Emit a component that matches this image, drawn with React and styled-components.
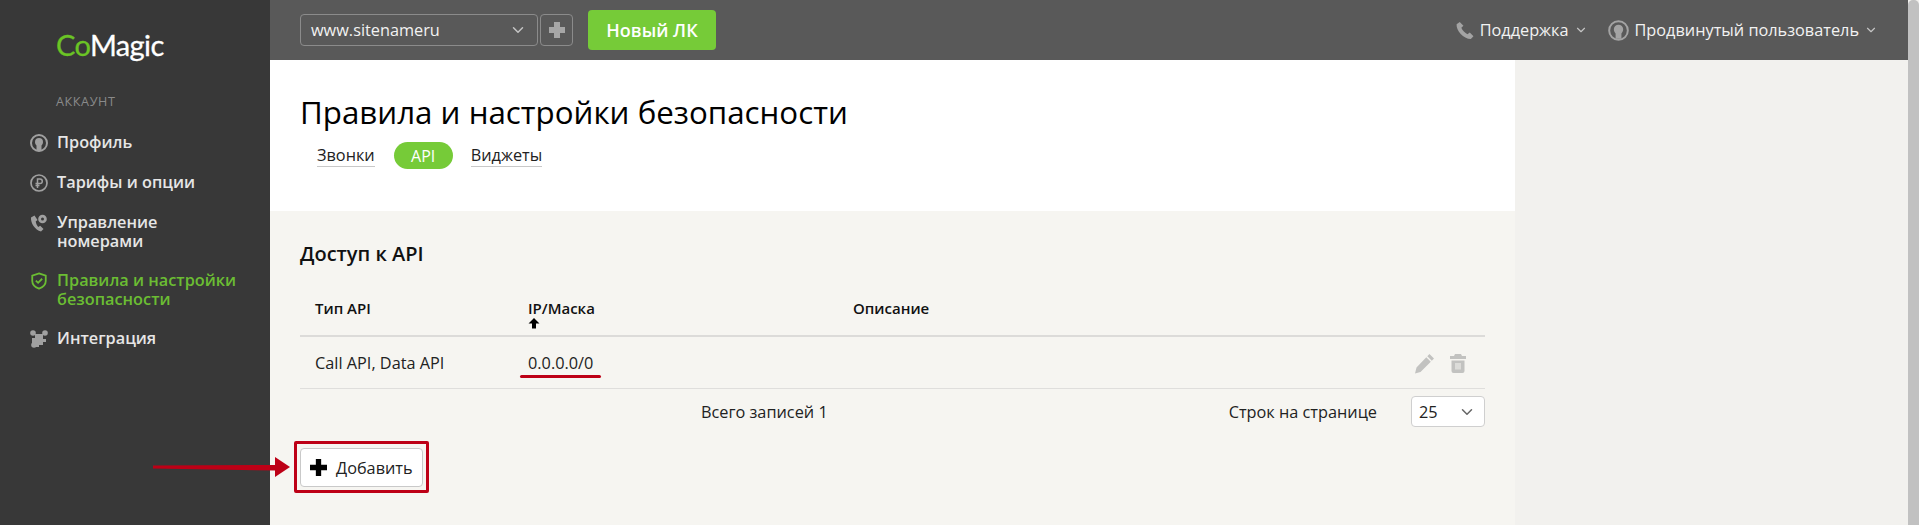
import styled, { createGlobalStyle } from "styled-components";
import { ChevronDown } from "lucide-react";

const Global = createGlobalStyle`
  html, body {
    margin: 0;
    padding: 0;
    height: 525px;
    overflow: hidden;
    font-family: "Open Sans", sans-serif;
  }
`;

const Page = styled.div`
  position: relative;
  display: flex;
  width: 1919px;
  height: 525px;
  overflow: hidden;
  background: #f2f1ee;
`;

const Sidebar = styled.aside`
  width: 270px;
  flex-shrink: 0;
  background: #383838;
  display: flex;
  flex-direction: column;
`;

const LogoBox = styled.div`
  height: 33px;
  margin: 28px 0 0 56px;
  font-family: "Lato", sans-serif;
  font-size: 29px;
  line-height: 33px;
  letter-spacing: -0.6px;
  -webkit-text-stroke: 0.3px currentColor;
  color: #fff;
  span {
    color: #6bc425;
  }
`;

const SectionLabel = styled.div`
  margin: 33px 0 0 56px;
  font-size: 12.6px;
  line-height: 16px;
  letter-spacing: 0.6px;
  color: #8a8a8a;
`;

const Menu = styled.nav`
  display: flex;
  flex-direction: column;
  margin-top: 23px;
  padding-left: 30px;
`;

const MenuItem = styled.a`
  display: flex;
  gap: 9px;
  margin-bottom: ${(p) => p.$gap}px;
  font-size: 16.3px;
  font-weight: 600;
  line-height: 19px;
  color: ${(p) => (p.$active ? "#6bbd33" : "#e6e6e6")};
  svg {
    flex-shrink: 0;
    width: 18px;
    height: 18px;
    margin-top: 1px;
  }
`;

const Main = styled.div`
  flex: 1;
  display: flex;
  flex-direction: column;
  min-width: 0;
`;

const TopBar = styled.header`
  height: 60px;
  flex-shrink: 0;
  background: #595959;
  display: flex;
  align-items: center;
  padding: 0 30px;
`;

const SiteSelect = styled.div`
  width: 238px;
  height: 32px;
  box-sizing: border-box;
  border: 1px solid #8b8b8b;
  border-radius: 4px;
  display: flex;
  align-items: center;
  justify-content: space-between;
  padding: 0 10px;
  font-size: 16.3px;
  color: #f2f2f2;
  svg {
    color: #c4c4c4;
  }
`;

const AddSite = styled.div`
  width: 33px;
  height: 32px;
  box-sizing: border-box;
  margin-left: 2px;
  border: 1px solid #8b8b8b;
  border-radius: 4px;
  display: flex;
  align-items: center;
  justify-content: center;
`;

const NewButton = styled.div`
  width: 128px;
  height: 40px;
  margin-left: 15px;
  background: #76cb38;
  border-radius: 4px;
  display: flex;
  align-items: center;
  justify-content: center;
  font-size: 18px;
  font-weight: 600;
  color: #fff;
`;

const TopRight = styled.div`
  margin-left: auto;
  display: flex;
  align-items: center;
  font-size: 16.3px;
  color: #f2f2f2;
`;

const TopLink = styled.div`
  display: flex;
  align-items: center;
  gap: 6px;
  margin-left: ${(p) => p.$left || 0}px;
  svg.chevron {
    color: #c4c4c4;
    margin-left: -1px;
  }
`;

const Columns = styled.div`
  flex: 1;
  display: flex;
  min-height: 0;
`;

const Content = styled.main`
  width: 1245px;
  flex-shrink: 0;
  background: #f6f5f1;
`;

const Head = styled.div`
  height: 151px;
  box-sizing: border-box;
  background: #fff;
  padding: 33px 30px 0;
`;

const Title = styled.h1`
  margin: 0;
  font-size: 31.3px;
  font-weight: 400;
  line-height: 38px;
  color: #000;
`;

const Tabs = styled.div`
  display: flex;
  align-items: center;
  margin: 11px 0 0 17px;
`;

const Tab = styled.div`
  font-size: 16.3px;
  line-height: 21px;
  color: #222;
  border-bottom: 1px solid #c8c8c8;
  margin-right: ${(p) => p.$gap}px;
`;

const ActiveTab = styled.div`
  width: 59px;
  height: 27px;
  margin-right: 18px;
  background: #76cb38;
  border-radius: 14px;
  display: flex;
  align-items: center;
  justify-content: center;
  font-size: 16px;
  color: #fff;
`;

const Section = styled.section`
  padding: 31px 30px 0;
`;

const SectionTitle = styled.h2`
  margin: 0;
  font-size: 20px;
  font-weight: 600;
  line-height: 24px;
  color: #111;
`;

const Grid = `
  display: grid;
  grid-template-columns: 213px 325px 1fr;
  padding-left: 15px;
  width: 1185px;
  box-sizing: border-box;
`;

const HeadRow = styled.div`
  ${Grid}
  height: 54px;
  margin-top: 17px;
  padding-top: 15px;
  border-bottom: 2px solid #dcdbd9;
  font-size: 15px;
  font-weight: 600;
  line-height: 20px;
  color: #111;
`;

const ArrowUp = styled.div`
  height: 12px;
  margin-top: -1px;
  line-height: 0;
`;

const BodyRow = styled.div`
  ${Grid}
  position: relative;
  height: 52px;
  align-items: center;
  border-bottom: 1px solid #dfdedc;
  font-size: 16.3px;
  color: #222;
`;

const RowActions = styled.div`
  position: absolute;
  right: 18px;
  top: 16px;
  display: flex;
  gap: 14px;
`;

const Footer = styled.div`
  display: flex;
  align-items: center;
  width: 1185px;
  height: 45px;
  font-size: 16.3px;
  color: #222;
`;

const Total = styled.div`
  margin-left: 401px;
`;

const PerPage = styled.div`
  margin-left: auto;
  margin-right: 34px;
`;

const PerSelect = styled.div`
  width: 74px;
  height: 31px;
  box-sizing: border-box;
  border: 1px solid #cfcfcf;
  border-radius: 4px;
  background: #fff;
  display: flex;
  align-items: center;
  justify-content: space-between;
  padding: 0 8px 0 7px;
  svg {
    color: #666;
  }
`;

const AddButton = styled.div`
  position: relative;
  width: 123px;
  height: 39px;
  box-sizing: border-box;
  margin-top: 14px;
  border: 1px solid #c9c9c9;
  border-radius: 4px;
  background: #fff;
  display: flex;
  align-items: center;
  gap: 9px;
  padding-left: 9px;
  font-size: 16.3px;
  color: #222;
`;

const RedFrame = styled.div`
  position: absolute;
  left: -7px;
  top: -8px;
  width: 135px;
  height: 52px;
  box-sizing: border-box;
  border: 3px solid #bd0016;
  border-radius: 2px;
`;

const RedLine = styled.div`
  position: absolute;
  left: 520px;
  top: 375px;
  width: 81px;
  height: 3px;
  border-radius: 2px;
  background: #bd0016;
`;

const Annotation = styled.svg`
  position: absolute;
  left: 150px;
  top: 450px;
`;

const Scroll = styled.div`
  width: 11px;
  flex-shrink: 0;
  background: #c1c1c1;
  border-radius: 5px 5px 0 0;
`;

const UserIcon = ({ color }) => (
  <svg viewBox="0 0 18 18" fill="none">
    <circle cx="9" cy="9" r="8" stroke={color} strokeWidth="2" />
    <path d="M6.5 16V11.5C5.6 10.6 5 9.4 5 8a4 4 0 0 1 8 0c0 1.4-.6 2.600-1.500 3.500V16z" fill={color} />
  </svg>
);

const TariffIcon = ({ color }) => (
  <svg viewBox="0 0 18 18" fill="none" stroke={color}>
    <circle cx="9" cy="9" r="8" strokeWidth="1.700" />
    <path d="M7.500 14V5h2.500a2.300 2.300 0 0 1 0 4.600H5.500M5.500 11.500h4" strokeWidth="1.500" />
  </svg>
);

const PhoneGearIcon = ({ color }) => (
  <svg viewBox="0 0 18 18" fill={color}>
    <path d="M4.500 1.500 1 3.500C.5 9 5 16 11 17.500l2.500-2.500-3.300-3.300-2 1.200C7 11.500 6 9.500 5.700 7.500L7.500 6z" />
    <circle cx="12.500" cy="5" r="4.300" />
    <circle cx="12.500" cy="5" r="1.500" fill="#383838" />
  </svg>
);

const ShieldIcon = ({ color }) => (
  <svg viewBox="0 0 18 20" fill="none" stroke={color}>
    <path d="M9 1.500 16.500 4v6c0 4-3.500 7-7.500 8.500C5 17 1.500 14 1.500 10V4z" strokeWidth="2" />
    <path d="M5.500 9.500 8 12l4.500-4.500" strokeWidth="2" />
  </svg>
);

const PuzzleIcon = ({ color }) => (
  <svg viewBox="0 0 18 18" fill={color}>
    <path d="M5 4h8v5h3v3h-3v3H9v2H5v-4H2V8h3z" />
    <circle cx="3" cy="3" r="2.800" />
    <circle cx="15" cy="3" r="2.800" />
    <circle cx="4" cy="15" r="2.800" />
  </svg>
);

const Plus = ({ size, bar, color }) => (
  <svg width={size} height={size} viewBox="0 0 16 16" fill={color}>
    <path d={`M${8 - bar} 0h${bar * 2}v${8 - bar}H16v${bar * 2}H${8 + bar}V16H${8 - bar}V${8 + bar}H0V${8 - bar}h${8 - bar}z`} />
  </svg>
);

const PhoneIcon = () => (
  <svg width="19" height="19" viewBox="0 0 18 18" fill="#a3a3a3">
    <path d="M4.500 1 1.500 3C1 9 8 17 15 17l2.500-2.500-3.500-3.500-2.200 1.500C9.500 11.500 7 9 6 6.500L8 4.500z" />
  </svg>
);

const PencilIcon = () => (
  <svg width="21" height="21" viewBox="0 0 21 21" fill="#c2c2c0">
    <path d="M15.500 1 20 5.500 17.800 7.700 13.300 3.200zM12.300 4.200 16.800 8.700 6.500 19 1 20.500 2.500 14.500z" />
  </svg>
);

const TrashIcon = () => (
  <svg width="18" height="21" viewBox="0 0 18 21" fill="#c2c2c0">
    <path d="M6 1h6l1 2h4v3H1V3h4zM2.500 7.500h13V18a2 2 0 0 1-2 2h-9a2 2 0 0 1-2-2zM6.500 10v6.500h1V10zm2 0v6.500h1V10zm2 0v6.500h1V10z" fillRule="evenodd" />
  </svg>
);

export default function App() {
  return (
    <Page>
      <Global />
      <Sidebar>
        <LogoBox>
          <span>Co</span>Magic
        </LogoBox>
        <SectionLabel>АККАУНТ</SectionLabel>
        <Menu>
          <MenuItem $gap={21}>
            <UserIcon color="#a0a0a0" />
            Профиль
          </MenuItem>
          <MenuItem $gap={21}>
            <TariffIcon color="#a0a0a0" />
            Тарифы и опции
          </MenuItem>
          <MenuItem $gap={20}>
            <PhoneGearIcon color="#a0a0a0" />
            <span>
              Управление
              <br />
              номерами
            </span>
          </MenuItem>
          <MenuItem $gap={20} $active>
            <ShieldIcon color="#6bbd33" />
            <span>
              Правила и настройки
              <br />
              безопасности
            </span>
          </MenuItem>
          <MenuItem $gap={0}>
            <PuzzleIcon color="#a0a0a0" />
            Интеграция
          </MenuItem>
        </Menu>
      </Sidebar>
      <Main>
        <TopBar>
          <SiteSelect>
            www.sitenameru
            <ChevronDown size={18} />
          </SiteSelect>
          <AddSite>
            <Plus size={16} bar={3} color="#a6a6a6" />
          </AddSite>
          <NewButton>Новый ЛК</NewButton>
          <TopRight>
            <TopLink>
              <PhoneIcon />
              Поддержка
              <ChevronDown className="chevron" size={14} />
            </TopLink>
            <TopLink $left={20}>
              <svg width="21" height="21" viewBox="0 0 18 18" fill="none">
                <circle cx="9" cy="9" r="8" stroke="#a3a3a3" strokeWidth="1.700" />
                <path d="M6.500 16V11.500C5.600 10.600 5 9.400 5 8a4 4 0 0 1 8 0c0 1.400-.6 2.600-1.500 3.500V16z" fill="#a3a3a3" />
              </svg>
              Продвинутый пользователь
              <ChevronDown className="chevron" size={14} />
            </TopLink>
          </TopRight>
        </TopBar>
        <Columns>
          <Content>
            <Head>
              <Title>Правила и настройки безопасности</Title>
              <Tabs>
                <Tab $gap={19}>Звонки</Tab>
                <ActiveTab>API</ActiveTab>
                <Tab $gap={0}>Виджеты</Tab>
              </Tabs>
            </Head>
            <Section>
              <SectionTitle>Доступ к API</SectionTitle>
              <HeadRow>
                <div>Тип API</div>
                <div>
                  IP/Маска
                  <ArrowUp>
                    <svg width="12" height="12" viewBox="0 0 12 12" fill="#000">
                      <path d="M6 1 11.500 6.500H8V11.500H4V6.500H.5z" />
                    </svg>
                  </ArrowUp>
                </div>
                <div>Описание</div>
              </HeadRow>
              <BodyRow>
                <div>Call API, Data API</div>
                <div>0.0.0.0/0</div>
                <div />
                <RowActions>
                  <PencilIcon />
                  <TrashIcon />
                </RowActions>
              </BodyRow>
              <Footer>
                <Total>Всего записей 1</Total>
                <PerPage>Строк на странице</PerPage>
                <PerSelect>
                  25
                  <ChevronDown size={18} />
                </PerSelect>
              </Footer>
              <AddButton>
                <Plus size={17} bar={2.5} color="#000" />
                Добавить
                <RedFrame />
              </AddButton>
            </Section>
          </Content>
        </Columns>
      </Main>
      <Scroll />
      <RedLine />
      <Annotation width="142" height="34" viewBox="0 0 142 34">
        <path d="M3 15.500 L126 15 L126 20.500 L3 18.500z" fill="#bd0016" />
        <path d="M125 7 L140 17 L125 27z" fill="#bd0016" />
      </Annotation>
    </Page>
  );
}
